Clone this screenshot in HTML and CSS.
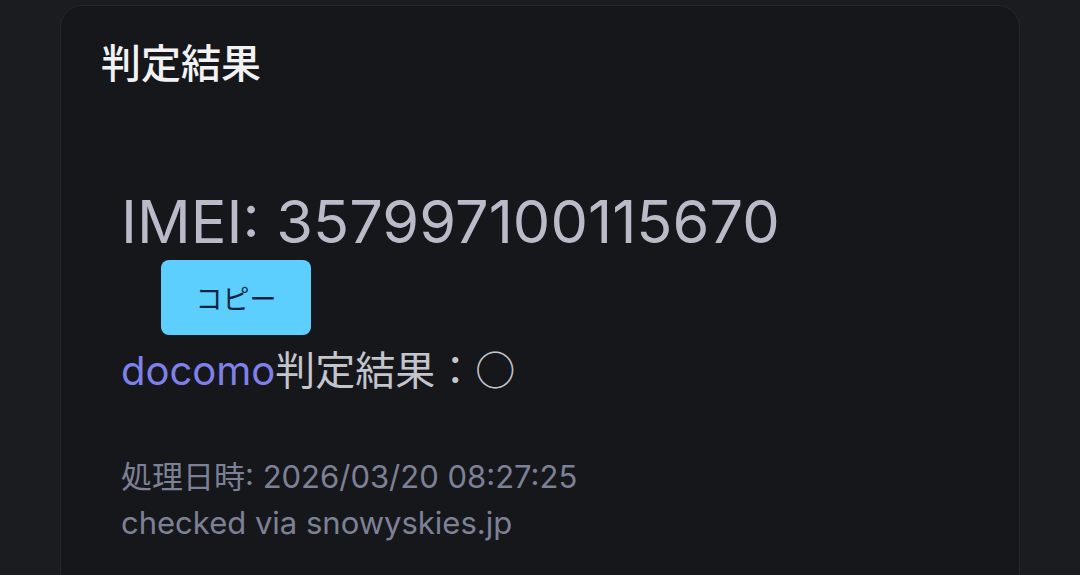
FILE: index.html
```html
<!DOCTYPE html>
<html lang="ja">
<head>
    <meta charset="UTF-8">
    <meta name="viewport" content="width=device-width, initial-scale=1.0">
    <title>判定結果</title>
    <link rel="stylesheet" href="styles.css">
</head>
<body>
    <div class="card">
        <h2 class="card-title">判定結果</h2>
        <div class="result">
            <p class="imei">IMEI: 357997100115670</p>
            <button class="copy-btn">コピー</button>
            <p class="carrier"><span class="carrier-name">docomo</span>判定結果：○</p>
            <div class="meta">
                <p>処理日時: 2026/03/20 08:27:25</p>
                <p>checked via snowyskies.jp</p>
            </div>
        </div>
    </div>
</body>
</html>
```

FILE: styles.css
```css
body {
    margin: 0;
    height: 575px;
    overflow: hidden;
    background-color: #1b1c20;
    font-family: Inter, "Noto Sans CJK JP", sans-serif;
}

.card {
    margin: 5px 60px 0;
    height: 640px;
    padding: 30px 40px;
    background-color: #16171b;
    border: 1px solid #25262b;
    border-radius: 22px;
}

.card-title {
    margin: 0;
    font-size: 40px;
    line-height: 56px;
    font-weight: 500;
    color: #f2f2f4;
}

.result {
    margin-left: 20px;
    padding-top: 94px;
}

.imei {
    margin: 0;
    font-size: 59.5px;
    line-height: 70px;
    color: #b9bbc9;
}

.copy-btn {
    display: block;
    margin: 4px 0 0 40px;
    width: 150px;
    height: 75px;
    border: none;
    border-radius: 8px;
    background-color: #5dcfff;
    color: #0c2640;
    font-family: "Noto Sans CJK JP", sans-serif;
    font-size: 27px;
}

.carrier {
    margin: 5px 0 0;
    font-family: "Noto Sans CJK JP", sans-serif;
    font-size: 40px;
    line-height: 56px;
    color: #c4c5cc;
}

.carrier-name {
    font-family: Inter, sans-serif;
    color: #7f80ea;
}

.meta {
    margin-top: 55px;
    color: #7d8196;
    font-size: 31px;
    line-height: 46px;
}

.meta p {
    margin: 0;
}
```
